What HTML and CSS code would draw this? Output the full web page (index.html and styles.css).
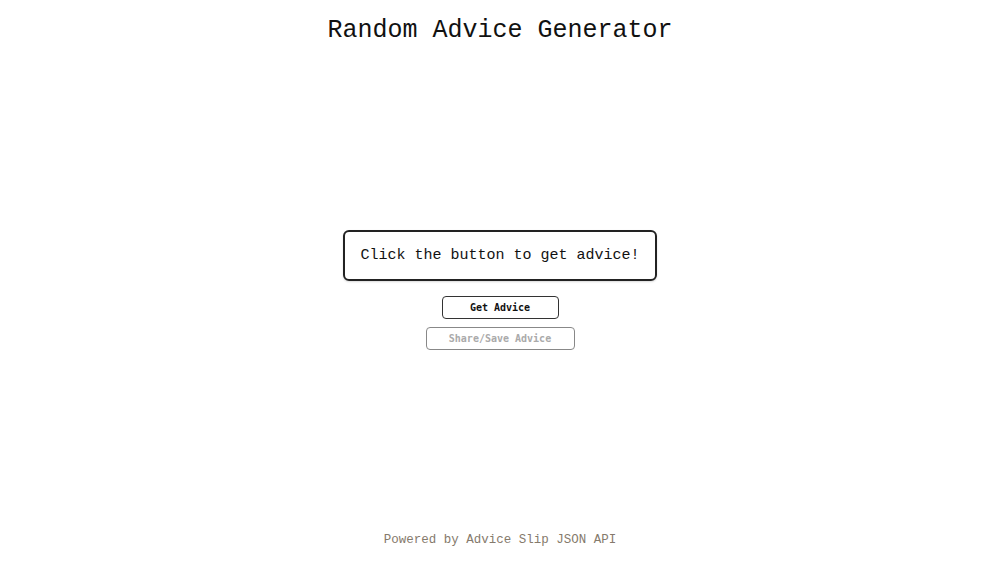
FILE: index.html
```html
<!DOCTYPE html>
<html lang="en">
<head>
    <meta charset="UTF-8">
    <meta name="viewport" content="width=device-width, initial-scale=1.0">
    <title>Random Advice Generator</title>
    <link rel="stylesheet" href="styles.css">
</head>
<body>
    <h1>Random Advice Generator</h1>
    <main class="main">
        <div class="advice" id="advice">Click the button to get advice!</div>
        <button class="btn" id="get">Get Advice</button>
        <button class="btn" id="share" disabled>Share/Save Advice</button>
    </main>
    <footer class="footer">Powered by Advice Slip JSON API</footer>
</body>
</html>
```

FILE: styles.css
```css
html, body {
    height: 100%;
}
body {
    margin: 0;
    font-family: "Liberation Mono", "Courier New", monospace;
    color: #111;
    background: #fff;
    text-align: center;
    display: flex;
    flex-direction: column;
}
h1 {
    font-size: 25px;
    font-weight: normal;
    margin: 16px 0 0;
    line-height: 30px;
}
.main {
    flex: 1;
    display: flex;
    flex-direction: column;
    align-items: center;
    justify-content: center;
    padding-top: 2px;
    gap: 8px;
}
.advice {
    border: 2px solid #222;
    border-radius: 6px;
    padding: 14px 15px 13px;
    font-size: 15px;
    line-height: 20px;
    margin-bottom: 7px;
    box-shadow: 0 1px 2px rgba(0, 0, 0, 0.15);
}
.btn {
    font-family: "DejaVu Sans Mono", monospace;
    font-weight: bold;
    font-size: 10px;
    background: #fff;
    color: #111;
    border: 1px solid #333;
    border-radius: 4px;
    height: 23px;
    width: 117px;
    padding: 0;
    cursor: pointer;
}
.btn:disabled {
    color: #aaa;
    border-color: #888;
    width: 149px;
    height: 23px;
    cursor: default;
}
.footer {
    font-size: 12.5px;
    color: #857a6c;
    padding-bottom: 15px;
    line-height: 16px;
}
```
